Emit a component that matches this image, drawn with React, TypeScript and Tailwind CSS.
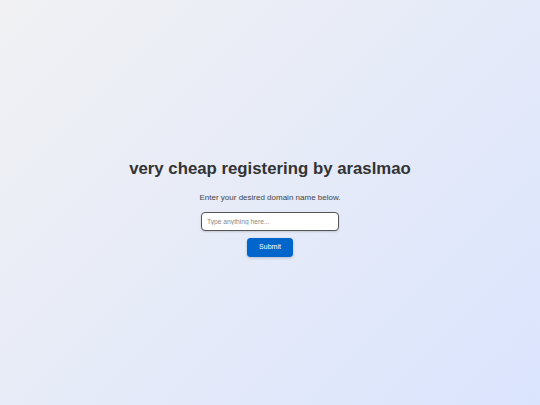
import React from "react";

export default function App() {
  return (
    <div
      className="h-screen w-full flex flex-col items-center justify-center pt-[11px] bg-[linear-gradient(135deg,#f1f1f3_0%,#dae4fd_100%)]"
      style={{ fontFamily: '"Liberation Sans", Arial, sans-serif' }}
    >
      <h1 className="text-[16.8px] leading-[20px] font-bold text-[#333333] m-0">
        very cheap registering by araslmao
      </h1>
      <p className="mt-[13.7px] text-[8px] leading-[10px] text-[#444444]">
        Enter your desired domain name below.
      </p>
      <input
        type="text"
        placeholder="Type anything here..."
        className="mt-[9px] w-[138px] h-[19px] bg-white border-[1.2px] border-[#555555] rounded-[4px] px-[5px] text-[6.7px] text-[#333] placeholder:text-[#888888] outline-none shadow-[0_1px_2px_rgba(0,0,0,0.15)]"
      />
      <button className="mt-[7px] w-[46px] h-[18.5px] bg-[#0066cc] text-white text-[7px] rounded-[3.5px] shadow-[0_1px_3px_rgba(0,0,0,0.2)]">
        Submit
      </button>
    </div>
  );
}
